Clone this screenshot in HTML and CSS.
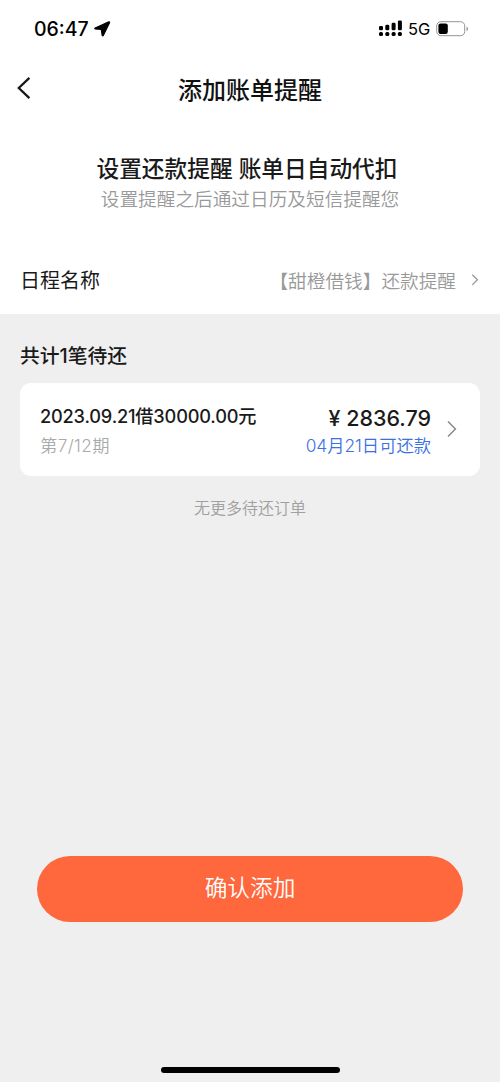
FILE: index.html
```html
<!DOCTYPE html>
<html lang="zh-CN">
<head>
<meta charset="utf-8">
<title>添加账单提醒</title>
<link rel="stylesheet" href="styles.css">
</head>
<body>
<div class="screen">
  <div class="status">
    <span class="time">06:47</span>
    <svg class="location" width="17" height="16" viewBox="0 0 17 16"><path d="M14.8.9 1.2 7q-.9.7.1 1l6 .5.9 6q.5 1 1.1 0L15.5 1.7q.2-1-.7-.8z" fill="#000" stroke="#000" stroke-width="1.2" stroke-linejoin="round"/></svg>
    <svg class="signal" width="24" height="17" viewBox="0 0 24 17">
      <rect x="0" y="6" width="4" height="4.3" rx="1.3"/><rect x="6.3" y="4.8" width="4" height="5.5" rx="1.3"/><rect x="12.6" y="2.8" width="4" height="7.5" rx="1.3"/><rect x="18.9" y=".4" width="4" height="9.9" rx="1.3"/>
      <rect x="0" y="12" width="4" height="4" rx="1.5"/><rect x="6.3" y="12" width="4" height="4" rx="1.5"/><rect x="12.6" y="12" width="4" height="4" rx="1.5"/><rect x="18.9" y="12" width="4" height="4" rx="1.5"/>
    </svg>
    <span class="network">5G</span>
    <svg class="battery" width="34" height="16" viewBox="0 0 34 16"><rect x=".7" y=".7" width="28" height="14" rx="4.2" fill="none" stroke="#949494"/><rect x="2.4" y="2.4" width="9.4" height="10.6" rx="2.2"/><path d="M30.5 5.4q1.6.6 1.6 2.4t-1.6 2.4z" fill="#999"/></svg>
  </div>
  <header class="navbar">
    <svg class="back" width="16" height="24" viewBox="0 0 16 24"><path d="M13.4 1.8 2.8 12l10.6 10.2" fill="none" stroke="#1a1a1a" stroke-width="2.3"/></svg>
    <h1 class="title">添加账单提醒</h1>
  </header>
  <section class="intro">
    <h2 class="headline">设置还款提醒 账单日自动代扣</h2>
    <p class="subline">设置提醒之后通过日历及短信提醒您</p>
  </section>
  <div class="row">
    <span class="label">日程名称</span>
    <span class="value">【甜橙借钱】还款提醒</span>
    <svg width="8" height="12" viewBox="0 0 8 12"><path d="M1.3.7 6.4 5.8l-5.1 5.1" fill="none" stroke="#999" stroke-width="1.3"/></svg>
  </div>
  <main class="bills">
    <h3 class="count">共计1笔待还</h3>
    <div class="card">
      <div class="loan">
        <span class="loan-name">2023.09.21借30000.00元</span>
        <span class="period">第7/12期</span>
      </div>
      <div class="due">
        <span class="amount">¥ 2836.79</span>
        <span class="date">04月21日可还款</span>
      </div>
      <svg class="chevron" width="10" height="18" viewBox="0 0 10 18"><path d="M1 1.4 8.4 9 1 16.6" fill="none" stroke="#888" stroke-width="1.5"/></svg>
    </div>
    <p class="empty">无更多待还订单</p>
  </main>
  <footer class="actions">
    <button class="confirm">确认添加</button>
    <div class="home-bar"></div>
  </footer>
</div>
</body>
</html>
```
FILE: styles.css
```css
* { box-sizing: border-box; margin: 0; padding: 0; }
body { font-family: Inter, "Noto Sans CJK SC", sans-serif; color: #1a1a1a; background: #efefef; }
h1, h2, h3 { font-weight: 500; }
.screen { width: 500px; height: 1082px; display: flex; flex-direction: column; white-space: nowrap; overflow: hidden; }
.status { height: 58px; display: flex; align-items: center; padding-left: 34px; background: #fff; color: #000; }
.time { font-size: 19.5px; font-weight: 550; width: 60px; padding-bottom: 1px; }
.location { flex: none; margin-bottom: 1px; }
.signal { margin-left: 268px; flex: none; margin-bottom: 1px; }
.network { font-size: 16.5px; width: 28px; margin-left: 5px; }
.battery { flex: none; margin-bottom: 1px; }
.navbar { height: 64px; background: #fff; display: grid; grid-template-columns: 50px 400px 50px; align-items: center; }
.back { margin: -5px 0 0 16px; }
.title { font-size: 24px; line-height: 36px; text-align: center; padding-top: 2px; color: #111; }
.intro { height: 124px; padding-top: 30px; background: #fff; text-align: center; }
.headline { font-size: 22.7px; line-height: 34px; padding-right: 6px; }
.subline { font-size: 18.67px; line-height: 28px; font-weight: 350; color: #999; }
.row { height: 68px; display: flex; align-items: center; padding: 0 21px 0 20px; background: #fff; }
.label { font-size: 20px; flex: 1; padding-bottom: 1px; }
.value { font-size: 18.67px; font-weight: 350; color: #999; margin-right: 15px; padding-bottom: 2px; }
.bills { padding: 27px 20px 0; flex: 1; }
.count { font-size: 19.8px; line-height: 30px; }
.card { display: flex; height: 93px; margin-top: 12px; padding: 0 23px 0 20px; background: #fff; border-radius: 11px; align-items: center; }
.loan, .due { display: flex; flex-direction: column; }
.loan { flex: 1; padding-top: 1px; }
.due { align-items: flex-end; margin-right: 16px; padding-top: 1px; }
.loan-name { font-size: 18.2px; font-weight: 450; line-height: 32px; letter-spacing: -.18px; }
.period { font-size: 17.3px; font-weight: 350; line-height: 28px; color: #aaa; letter-spacing: .35px; }
.amount { font-size: 21.5px; font-weight: 450; line-height: 32px; padding-top: 2px; margin-bottom: -2px; }
.date { font-size: 17.3px; font-weight: 350; line-height: 28px; color: #3b70e2; }
.chevron { margin-bottom: 2px; }
.empty { margin-top: 20px; font-size: 16px; font-weight: 350; line-height: 24px; color: #a0a0a0; text-align: center; }
.actions { height: 226px; padding: 0 37px; display: flex; flex-direction: column; align-items: center; }
.confirm { width: 426px; height: 66px; padding-bottom: 2px; border: 0; border-radius: 33px; background: #ff673c; color: #fff; font: 350 22.7px/34px Inter, "Noto Sans CJK SC", sans-serif; }
.home-bar { width: 179px; height: 6px; border-radius: 3px; background: #000; margin-top: 145px; }
```
